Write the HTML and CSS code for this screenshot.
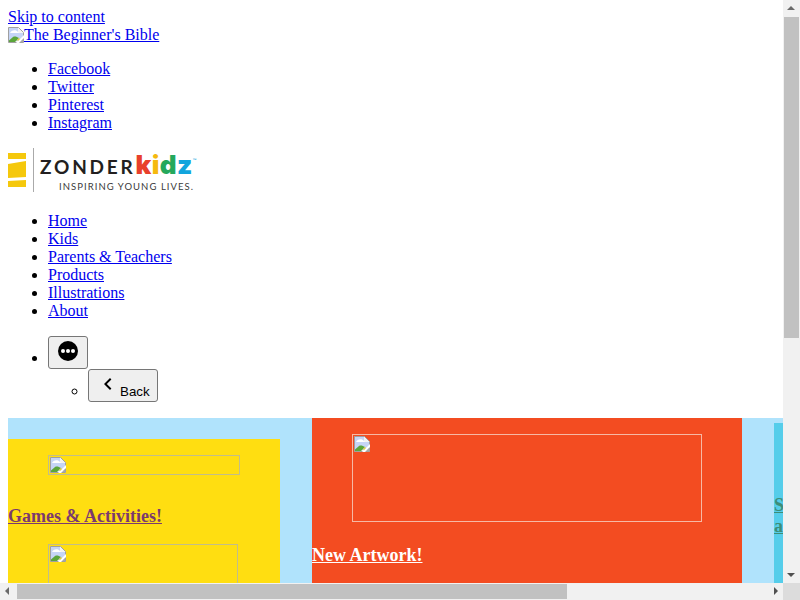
FILE: index.html
```html
<!DOCTYPE html>
<html lang="en">
<head>
  <meta charset="UTF-8" />
  <meta name="viewport" content="width=device-width, initial-scale=1.0"/>
  <title>The Beginner's Bible</title>
  <link rel="stylesheet" href="styles.css">
</head>
<body>
  <div class="window">
    <div class="page">
      <a href="#content">Skip to content</a>
      <div class="site-title">
        <a href="#"><svg class="broken" viewBox="0 0 16 16"><use href="#broken-icon"/></svg>The Beginner's Bible</a>
      </div>

      <!-- social links -->
      <ul>
        <li><a href="#">Facebook</a></li>
        <li><a href="#">Twitter</a></li>
        <li><a href="#">Pinterest</a></li>
        <li><a href="#">Instagram</a></li>
      </ul>

      <!-- logo -->
      <div class="logo">
        <svg class="logo-mark" viewBox="0 0 18 34">
          <polygon points="0,0 18,0 18,6 0,6" fill="#f5c80c"/>
          <polygon points="0,11 18,8 18,24 0,25" fill="#f5c80c"/>
          <polygon points="0,28 18,27 18,34 0,34" fill="#f5c80c"/>
        </svg>
        <span class="logo-line"></span>
        <div class="logo-text">
          <div class="logo-name">ZONDER<span class="kid-k">k</span><span class="kid-i">i</span><span class="kid-d">d</span><span class="kid-z">z</span><sup class="logo-tm">™</sup></div>
          <div class="logo-tag">INSPIRING YOUNG LIVES.</div>
        </div>
      </div>

      <!-- main nav -->
      <ul>
        <li><a href="#">Home</a></li>
        <li><a href="#">Kids</a></li>
        <li><a href="#">Parents &amp; Teachers</a></li>
        <li><a href="#">Products</a></li>
        <li><a href="#">Illustrations</a></li>
        <li><a href="#">About</a></li>
      </ul>

      <ul class="menu">
        <li>
          <button class="menu-btn" type="button"><svg class="more-icon" viewBox="0 0 24 24">
              <circle cx="12" cy="12" r="10" fill="#000"/>
              <circle cx="7" cy="12" r="2" fill="#fff"/>
              <circle cx="12" cy="12" r="2" fill="#fff"/>
              <circle cx="17" cy="12" r="2" fill="#fff"/>
            </svg></button>
          <ul class="submenu">
            <li>
              <button class="back-btn" type="button"><svg class="back-icon" viewBox="0 0 24 24"><path d="M15.4 7.4 14 6l-6 6 6 6 1.4-1.4L10.8 12z" fill="#000"/></svg>Back</button>
            </li>
          </ul>
        </li>
      </ul>

      <!-- feature cards -->
      <div class="hero" id="content">
        <div class="card card-yellow">
          <a class="pic pic-small" href="#"><svg class="broken" viewBox="0 0 16 16"><use href="#broken-icon"/></svg></a>
          <h3><a href="#">Games &amp; Activities!</a></h3>
          <a class="pic pic-tall" href="#"><svg class="broken" viewBox="0 0 16 16"><use href="#broken-icon"/></svg></a>
        </div>
        <div class="card card-orange">
          <a class="pic pic-wide" href="#"><svg class="broken" viewBox="0 0 16 16"><use href="#broken-icon"/></svg></a>
          <h3><a href="#">New Artwork!</a></h3>
        </div>
        <div class="card card-cyan">
          <h3><a href="#">Stories and</a></h3>
        </div>
      </div>
    </div>

    <!-- scrollbars -->
    <div class="scroll-v">
      <span class="arrow arrow-up"></span>
      <div class="track"><div class="thumb-v"></div></div>
      <span class="arrow arrow-down"></span>
    </div>
    <div class="scroll-h">
      <span class="arrow arrow-left"></span>
      <div class="track"><div class="thumb-h"></div></div>
      <span class="arrow arrow-right"></span>
    </div>
    <div class="scroll-corner"></div>
  </div>

  <svg class="icon-defs" width="0" height="0">
    <symbol id="broken-icon" viewBox="0 0 16 16">
      <path d="M.5.5h10l5 5v10H.5z" fill="#f4f4f4" stroke="#a0a0a0"/>
      <path d="M1 1h9v5h5v8H1z" fill="#c6d5f7"/>
      <path d="M2 6c1-3 6-4 8-1l1 1H2z" fill="#fff"/>
      <path d="M1 15v-1.5l4-3.5c2-1 4 0 6 1l-4 4z" fill="#5ba63a"/>
      <path d="M8 16l8-8v3l-5 5z" fill="#fff"/>
      <path d="M12 15l3-3v3z" fill="#a8a8a8"/>
      <path d="M9 13l2-2 1 1-2 2z" fill="#e6cf3c"/>
    </symbol>
  </svg>
</body>
</html>
```

FILE: styles.css
```css
body {
  margin: 0;
  font-family: "Liberation Serif", serif;
  font-size: 16px;
  color: #000;
}

a {
  color: #0000ee;
}

ul {
  margin: 16px 0;
  padding-left: 40px;
}

.window {
  display: grid;
  grid-template-columns: 783px 17px;
  grid-template-rows: 583px 17px;
  width: 800px;
  height: 600px;
  overflow: hidden;
}

.page {
  padding: 8px 0 0 8px;
  overflow: hidden;
}

.broken {
  display: inline-block;
  width: 16px;
  height: 16px;
  margin-top: 1px;
  vertical-align: top;
}

/* logo */
.logo {
  display: flex;
  align-items: flex-start;
  height: 44px;
  margin: 16px 0 20px;
}

.logo-mark {
  width: 18px;
  height: 34px;
  margin-top: 5px;
}

.logo-line {
  width: 1px;
  height: 44px;
  margin: 0 6px 0 7px;
  background: #aaa;
}

.logo-name {
  height: 26px;
  margin-top: 4px;
  font-family: Lato, sans-serif;
  font-size: 19px;
  font-weight: 700;
  line-height: 26px;
  letter-spacing: 2.8px;
  color: #231f20;
  white-space: nowrap;
}

.logo-name span {
  font-family: Inter, sans-serif;
  font-size: 26px;
  font-weight: 900;
  letter-spacing: 0.4px;
}

.logo-tm {
  font-size: 5px;
  font-weight: 400;
  letter-spacing: 0;
  line-height: 0;
  color: #12a5dd;
  vertical-align: 12px;
}

.kid-k { color: #e8402c; }
.kid-i { color: #f5b90f; }
.kid-d { color: #25a85c; }
.kid-z { color: #12a5dd; }

.logo-tag {
  margin: 3px 0 0 19px;
  font-family: Lato, sans-serif;
  font-size: 9.5px;
  line-height: 12px;
  letter-spacing: 1.05px;
  color: #3a3a3a;
  white-space: nowrap;
}

/* menu buttons */
.submenu {
  margin: 0;
  list-style-type: circle;
}

.menu-btn, .back-btn {
  height: 33px;
  background: #efefef;
  border: 1px solid #767676;
  border-radius: 3px;
  font-family: "Liberation Sans", sans-serif;
  font-size: 13.33px;
  white-space: nowrap;
}

.menu-btn {
  width: 40px;
  padding: 0 7px;
}

.back-btn {
  width: 70px;
  padding: 0 0 0 7px;
  text-align: left;
}

.more-icon, .back-icon {
  width: 24px;
  height: 24px;
}

/* feature cards */
.hero {
  display: flex;
  align-items: flex-start;
  gap: 32px;
  width: 1058px;
  height: 200px;
  background: #b0e3fc;
}

.card {
  height: 200px;
}

.card h3 {
  margin: 0;
  font-size: 18px;
}

.pic {
  display: block;
  margin-left: 40px;
  padding: 0 1px;
  border: 1px solid #c2bd8a;
  box-sizing: border-box;
}

.card-yellow {
  width: 272px;
  margin-top: 21px;
  background: #ffde11;
}

.card-yellow h3 {
  margin: 31px 0 17px;
}

.card-yellow a {
  color: #7b3a6e;
}

.pic-small {
  width: 192px;
  height: 20px;
  margin-top: 16px;
}

.pic-tall {
  width: 190px;
  height: 60px;
}

.card-orange {
  width: 430px;
  background: #f34c21;
}

.card-orange a {
  color: #fff;
}

.card-orange h3 {
  margin-top: 23px;
}

.pic-wide {
  width: 350px;
  height: 88px;
  margin-top: 16px;
  border-color: #f6b9a5;
}

.card-cyan {
  width: 100px;
  margin-top: 5px;
  background: #55cdea;
}

.card-cyan a {
  color: #3d8d78;
}

.card-cyan h3 {
  width: 70px;
  margin-top: 72px;
}

/* scrollbars */
.scroll-v, .scroll-h {
  display: flex;
  background: #f1f1f1;
}

.scroll-v {
  flex-direction: column;
}

.track {
  flex: 1;
}

.thumb-v {
  width: 15px;
  height: 321px;
  margin-left: 1px;
  background: #c1c1c1;
}

.thumb-h {
  width: 550px;
  height: 15px;
  margin-top: 1px;
  background: #c1c1c1;
}

.scroll-corner {
  background: #dcdcdc;
}

.arrow {
  position: relative;
  flex: none;
  width: 17px;
  height: 17px;
}

.arrow::after {
  content: "";
  position: absolute;
  width: 0;
  height: 0;
  border: 4px solid transparent;
}

.arrow-up::after {
  left: 4px;
  top: 2px;
  border-bottom: 4px solid #6a6a6a;
}

.arrow-down::after {
  left: 4px;
  top: 7px;
  border-top: 4px solid #505050;
}

.arrow-left::after {
  left: 1px;
  top: 4px;
  border-right: 4px solid #6a6a6a;
}

.arrow-right::after {
  left: 8px;
  top: 4px;
  border-left: 4px solid #505050;
}

.icon-defs {
  position: absolute;
}
```
